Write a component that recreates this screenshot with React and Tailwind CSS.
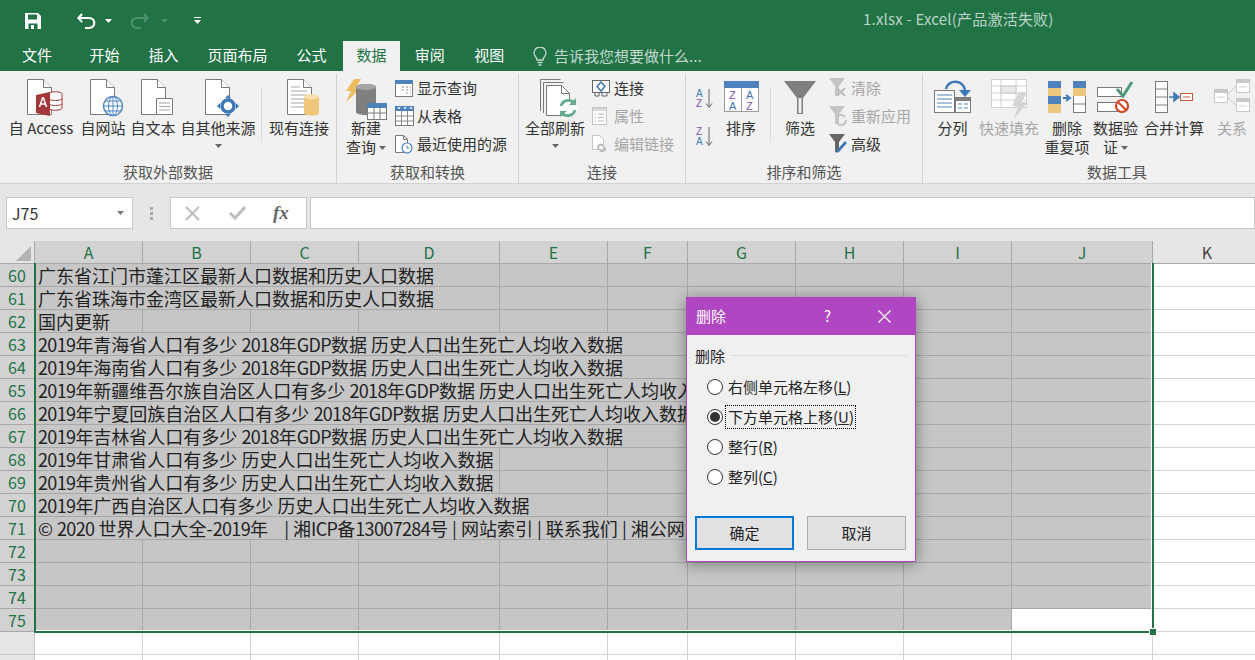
import React from "react";

const FONT = "font-['Noto_Sans_CJK_SC','Noto_Sans',sans-serif]";

const COLUMNS = ["A", "B", "C", "D", "E", "F", "G", "H", "I", "J", "K"];
const GRID = "grid h-[23px] grid-rows-[23px] grid-cols-[108px_108px_108px_141px_108px_80px_108px_108px_108px_141px_108px]";

const ROWS = [
    {n: 60, text: "广东省江门市蓬江区最新人口数据和历史人口数据", span: "col-span-4", used: 4},
    {n: 61, text: "广东省珠海市金湾区最新人口数据和历史人口数据", span: "col-span-4", used: 4},
    {n: 62, text: "国内更新", span: "col-span-1", used: 1},
    {n: 63, text: "2019年青海省人口有多少 2018年GDP数据 历史人口出生死亡人均收入数据", span: "col-span-6", used: 6},
    {n: 64, text: "2019年海南省人口有多少 2018年GDP数据 历史人口出生死亡人均收入数据", span: "col-span-6", used: 6},
    {n: 65, text: "2019年新疆维吾尔族自治区人口有多少 2018年GDP数据 历史人口出生死亡人均收入数据", span: "col-span-7", used: 7},
    {n: 66, text: "2019年宁夏回族自治区人口有多少 2018年GDP数据 历史人口出生死亡人均收入数据", span: "col-span-7", used: 7},
    {n: 67, text: "2019年吉林省人口有多少 2018年GDP数据 历史人口出生死亡人均收入数据", span: "col-span-6", used: 6},
    {n: 68, text: "2019年甘肃省人口有多少 历史人口出生死亡人均收入数据", span: "col-span-4", used: 4},
    {n: 69, text: "2019年贵州省人口有多少 历史人口出生死亡人均收入数据", span: "col-span-4", used: 4},
    {n: 70, text: "2019年广西自治区人口有多少 历史人口出生死亡人均收入数据", span: "col-span-5", used: 5},
    {n: 71, text: "© 2020 世界人口大全-2019年    | 湘ICP备13007284号 | 网站索引 | 联系我们 | 湘公网", span: "col-span-7", used: 7},
    {n: 72, used: 0},
    {n: 73, used: 0},
    {n: 74, used: 0},
    {n: 75, used: 0},
    {n: 76, used: 0, plain: true},
    {n: 77, used: 0, plain: true},
];

// latin runs sit tighter than the CJK font's own digits
const CellText = ({text}) => text.split(/([0-9A-Za-z]+)/).map((part, i) => (
    i % 2 === 1 ? <span key={i} className="tracking-[-0.65px]">{part}</span> : part
));

const Caret = ({className = "", color = "#666"}) => (
    <svg width="7" height="4" viewBox="0 0 7 4" className={className}><path d="M0 0h7L3.500 4z" fill={color}/></svg>
);

const Doc = ({lines = false}) => (
    <g>
        <path d="M.5.5h16l8 8v27H.5z" fill="#fff" stroke="#7a7a7a"/>
        <path d="M16.500.5v8h8" fill="#fff" stroke="#7a7a7a"/>
        {lines && <path d="M4 8h9M4 12h16M4 16h16M4 20h16M4 24h16M4 28h16" stroke="#a6a6a6"/>}
    </g>
);

const AccessIcon = () => (
    <svg width="36" height="38" viewBox="0 0 36 38">
        <Doc/>
        <path d="M22 15c0-3 13-3 13 0v14c0 3-13 3-13 0z" fill="#fff" stroke="#a4373a"/>
        <path d="M22 20c2 2 11 2 13 0M22 25c2 2 11 2 13 0" fill="none" stroke="#a4373a"/>
        <path d="M9 16l14-3v24L9 34z" fill="#a4373a"/>
        <path d="M12.500 28l3-9h1l3 9M13.500 25h5" fill="none" stroke="#fff" strokeWidth="1.500"/>
    </svg>
);

const WebIcon = () => (
    <svg width="34" height="38" viewBox="0 0 34 38">
        <Doc/>
        <circle cx="23" cy="27" r="9.500" fill="#fff" stroke="#4f86c6" strokeWidth="1.500"/>
        <path d="M13.500 27h19M15 22h16M15 32h16M23 17.500v19" stroke="#4f86c6"/>
        <ellipse cx="23" cy="27" rx="4.500" ry="9.500" fill="none" stroke="#4f86c6"/>
    </svg>
);

const TextIcon = () => (
    <svg width="33" height="38" viewBox="0 0 33 38">
        <Doc/>
        <path d="M15.500 19.500h16v16h-16z" fill="#fff" stroke="#7a7a7a"/>
        <path d="M18 24h11M18 27.500h11M18 31h11" stroke="#a6a6a6"/>
    </svg>
);

const OtherIcon = () => (
    <svg width="34" height="38" viewBox="0 0 34 38">
        <Doc/>
        <circle cx="23" cy="27" r="6" fill="#fff" stroke="#3f78b8" strokeWidth="3.500"/>
        <path d="M23 16l3 3h-6zM23 38l3-3h-6zM12 27l3-3v6zM34 27l-3-3v6z" fill="#3f78b8"/>
    </svg>
);

const ExistingIcon = () => (
    <svg width="33" height="38" viewBox="0 0 33 38">
        <Doc lines/>
        <path d="M17 18c0-3.500 15-3.500 15 0v16c0 3.500-15 3.500-15 0z" fill="#eec67c"/>
        <ellipse cx="24.500" cy="18" rx="7.500" ry="2.500" fill="#f6deae"/>
    </svg>
);

const NewQueryIcon = () => (
    <svg width="42" height="41" viewBox="0 0 42 41">
        <path d="M9 0h7L10 10h5L1 23l5-11H1z" fill="#eebb5f"/>
        <path d="M11 8c0-4 20-4 20 0v25c0 4-20 4-20 0z" fill="#7f7f7f"/>
        <ellipse cx="21" cy="8" rx="10" ry="3" fill="#a6a6a6"/>
        <rect x="22.500" y="24.500" width="19" height="16" fill="#fff" stroke="#7a7a7a"/>
        <rect x="22" y="24" width="20" height="5" fill="#4f81bd"/>
        <path d="M22 34h20M29 29v12M35 29v12" stroke="#7a7a7a"/>
    </svg>
);

const ShowQueryIcon = () => (
    <svg width="18" height="17" viewBox="0 0 18 17">
        <rect x=".5" y=".5" width="17" height="16" fill="#fff" stroke="#7a7a7a"/>
        <rect width="18" height="4" fill="#4f81bd"/>
        <path d="M7 7h2M11 7h2M15 7h1M7 10h2M11 10h2M15 10h1M11 13h2M15 13h1" stroke="#8a8a8a"/>
    </svg>
);

const FromTableIcon = () => (
    <svg width="19" height="20" viewBox="0 0 19 20">
        <rect x=".5" y=".5" width="18" height="19" fill="#fff" stroke="#7a7a7a"/>
        <rect width="19" height="5" fill="#4f81bd"/>
        <path d="M1 10h17M1 15h17M6.500 5v14M12.500 5v14" stroke="#8a8a8a"/>
        <path d="M3 1l1 2 1-2M9 1l1 2 1-2M15 1l1 2 1-2" stroke="#fff" fill="none"/>
    </svg>
);

const RecentIcon = () => (
    <svg width="18" height="19" viewBox="0 0 18 19">
        <path d="M.5.500h8l4 4v13H.5z" fill="#fff" stroke="#7a7a7a"/>
        <path d="M8.500.5v4h4" fill="none" stroke="#7a7a7a"/>
        <circle cx="12" cy="13" r="5" fill="#fff" stroke="#4f81bd" strokeWidth="1.200"/>
        <path d="M12 10.500V13h2.500" fill="none" stroke="#4f81bd"/>
    </svg>
);

const RefreshAllIcon = () => (
    <svg width="38" height="38" viewBox="0 0 38 38">
        <path d="M.5 32V.5h20" fill="none" stroke="#7a7a7a"/>
        <path d="M3.500 34V3.500h20" fill="none" stroke="#7a7a7a"/>
        <path d="M6.500 36.500v-30h15l8 8v22z" fill="#fff" stroke="#7a7a7a"/>
        <path d="M21.500 6.500v8h8" fill="none" stroke="#7a7a7a"/>
        <circle cx="28" cy="29" r="9" fill="#fff"/>
        <path d="M21 27a7.500 7.500 0 0 1 13-3M35 31a7.500 7.500 0 0 1-13 3" fill="none" stroke="#63a98b" strokeWidth="2.800"/>
        <path d="M36 19v7h-7zM20 38v-6h7z" fill="#63a98b"/>
    </svg>
);

const ConnectIcon = () => (
    <svg width="18" height="17" viewBox="0 0 18 17">
        <rect x=".5" y=".5" width="17" height="12" fill="#fff" stroke="#666"/>
        <path d="M9 2l4 4.500L9 11 5 6.500z" fill="#fff" stroke="#3f78b8" strokeWidth="1.500"/>
        <path d="M3 13v3h4v-3M10 13v3h5v-3" fill="none" stroke="#666"/>
    </svg>
);

const PropsIcon = () => (
    <svg width="15" height="18" viewBox="0 0 15 18">
        <rect x=".5" y=".5" width="14" height="17" fill="#fff" stroke="#c4c4c4"/>
        <rect x="1" y="1" width="13" height="3" fill="#d8d8d8"/>
        <path d="M3 7h1M6 7h6M3 10.500h1M6 10.500h6M3 14h1M6 14h6" stroke="#bbb"/>
    </svg>
);

const EditLinkIcon = () => (
    <svg width="16" height="19" viewBox="0 0 16 19">
        <path d="M.5.500h7l4 4v10H.5z" fill="#fff" stroke="#c4c4c4"/>
        <path d="M7 14c-3-3 2-6 4-3M12 12c3 3-2 6-4 3" fill="none" stroke="#b8b8b8" strokeWidth="2"/>
    </svg>
);

const SortUpIcon = ({flip}) => (
    <svg width="18" height="21" viewBox="0 0 18 21">
        <text x="0" y="9" fontSize="10" fill={flip ? "#8054a8" : "#3f78b8"} fontFamily="Liberation Sans, sans-serif">{flip ? "Z" : "A"}</text>
        <text x="0" y="19" fontSize="10" fill={flip ? "#3f78b8" : "#8054a8"} fontFamily="Liberation Sans, sans-serif">{flip ? "A" : "Z"}</text>
        <path d="M13 1v18M10 15.500l3 4 3-4" fill="none" stroke="#666"/>
    </svg>
);

const SortIcon = () => (
    <svg width="35" height="31" viewBox="0 0 35 31" className="mt-[2px]">
        <rect x=".5" y=".5" width="34" height="30" fill="#fff" stroke="#9a9a9a"/>
        <rect width="35" height="7" fill="#4f81bd"/>
        <path d="M17.500 7v24" stroke="#9a9a9a"/>
        <text x="5" y="18" fontSize="11" fill="#8054a8" fontFamily="Liberation Sans, sans-serif">Z</text>
        <text x="5" y="29" fontSize="11" fill="#3f78b8" fontFamily="Liberation Sans, sans-serif">A</text>
        <text x="22" y="18" fontSize="11" fill="#3f78b8" fontFamily="Liberation Sans, sans-serif">A</text>
        <text x="22" y="29" fontSize="11" fill="#8054a8" fontFamily="Liberation Sans, sans-serif">Z</text>
    </svg>
);

const FunnelIcon = () => (
    <svg width="32" height="33" viewBox="0 0 32 33" className="mt-[2px]">
        <path d="M0 0h32L19 17v16h-6V17z" fill="#7f7f7f"/>
        <path d="M14.500 17h3v15h-3z" fill="#f1f1f1"/>
    </svg>
);

const SmallFunnel = ({dim, mark}) => (
    <svg width="20" height="20" viewBox="0 0 20 20">
        <path d="M0 0h16l-6 8v10H6V8z" fill={dim ? "#c4c4c4" : "#666"}/>
        {mark === "x" && <path d="M8 10l8 8M16 10l-8 8" stroke="#bdbdbd" strokeWidth="2"/>}
        {mark === "r" && <path d="M7 14a5 5 0 0 1 9-3M17 14a5 5 0 0 1-9 3" fill="none" stroke="#c4c4c4" strokeWidth="2"/>}
        {mark === "p" && <path d="M7 19l1-3 8-9 2 2-8 9z" fill="#3f78b8"/>}
    </svg>
);

const SplitIcon = () => (
    <svg width="37" height="33" viewBox="0 0 37 33" className="mt-[1px]">
        <rect x=".5" y="10.500" width="20" height="22" fill="#fff" stroke="#7a7a7a"/>
        <path d="M3 15h15M3 19h15M3 23h15M3 27h15" stroke="#4f81bd" strokeWidth="1.200"/>
        <rect x="21.500" y="17.500" width="15" height="15" fill="#fff" stroke="#7a7a7a"/>
        <rect x="22" y="18" width="14" height="3" fill="#7f7f7f"/>
        <path d="M24 24h4M30 24h4M24 28h4M30 28h4" stroke="#4f81bd" strokeWidth="1.200"/>
        <path d="M12 9c2-10 18-10 19 2" fill="none" stroke="#3f78b8" strokeWidth="2.500"/>
        <path d="M25 10h12l-6 7z" fill="#3f78b8"/>
    </svg>
);

const FlashIcon = () => (
    <svg width="37" height="40" viewBox="0 0 37 40">
        <rect x=".5" y=".5" width="35" height="28" fill="#fff" stroke="#d0d0d0"/>
        <path d="M0 7h36M0 14h36M0 21h36M10 0v28M25 0v28" stroke="#d0d0d0"/>
        <rect x="10" y="7" width="15" height="7" fill="#e8e8e8" stroke="#c8c8c8"/>
        <path d="M28 13h8l-5 10h6L23 40l4-13h-6z" fill="#d4d4d4"/>
    </svg>
);

const DedupeIcon = () => (
    <svg width="38" height="32" viewBox="0 0 38 32" className="mt-[2px]">
        <rect width="13" height="32" fill="#4f81bd"/>
        <rect y="7" width="13" height="8" fill="#ecc77d"/>
        <rect y="23" width="13" height="9" fill="#ecc77d"/>
        <rect x="25.500" y=".5" width="12" height="31" fill="#fff" stroke="#7a7a7a"/>
        <rect x="25" width="13" height="7" fill="#4f81bd"/>
        <rect x="25" y="7" width="13" height="8" fill="#ecc77d"/>
        <path d="M25 23h13" stroke="#7a7a7a"/>
        <path d="M15 17h5M18 14l4 3-4 3" fill="none" stroke="#3f78b8" strokeWidth="2"/>
    </svg>
);

const ValidateIcon = () => (
    <svg width="37" height="32" viewBox="0 0 37 32" className="mt-[2px]">
        <rect x=".5" y="6.500" width="24" height="9" fill="#fff" stroke="#7a7a7a"/>
        <rect x=".5" y="21.500" width="24" height="9" fill="#fff" stroke="#7a7a7a"/>
        <path d="M20 8l6 7L35 1" fill="none" stroke="#4f9a7a" strokeWidth="3"/>
        <circle cx="25" cy="25" r="6" fill="#fff" stroke="#d2492a" strokeWidth="2.200"/>
        <path d="M21 21l8 8" stroke="#d2492a" strokeWidth="2.200"/>
    </svg>
);

const ConsolidateIcon = () => (
    <svg width="38" height="32" viewBox="0 0 38 32" className="mt-[2px]">
        <rect x=".5" y=".5" width="12" height="31" fill="#fff" stroke="#7a7a7a"/>
        <path d="M0 8h13M0 16h13M0 24h13" stroke="#7a7a7a"/>
        <path d="M14 16h8M19 12l5 4-5 4z" fill="#3f78b8" stroke="#3f78b8" strokeWidth="1.500"/>
        <rect x="25.500" y="12.500" width="12" height="7" fill="#fff" stroke="#c8553a"/>
        <path d="M28 16h7" stroke="#c8553a"/>
    </svg>
);

const RelationIcon = () => (
    <svg width="36" height="33" viewBox="0 0 36 33">
        <rect x=".5" y="10.500" width="13" height="13" fill="#fff" stroke="#c8c8c8"/>
        <rect x="22.500" y=".5" width="13" height="13" fill="#fff" stroke="#c8c8c8"/>
        <rect x="22.500" y="19.500" width="13" height="13" fill="#fff" stroke="#c8c8c8"/>
        <rect x="1" y="11" width="12" height="3" fill="#c8c8c8"/>
        <rect x="23" y="1" width="12" height="3" fill="#c8c8c8"/>
        <rect x="23" y="20" width="12" height="3" fill="#c8c8c8"/>
        <path d="M14 15l8-8M14 19l8 7" stroke="#c8c8c8"/>
        <path d="M3 18h8M25 8h8M25 27h8" stroke="#d4d4d4"/>
    </svg>
);

const Big = ({icon, width, lines, caret, dim, shift}) => (
    <div className={`flex flex-col items-center shrink-0 ${width}`}>
        <div className={`h-[44px] pt-[5px] flex justify-center ${shift ? "pl-[8px]" : ""}`}>{icon}</div>
        {lines.map((line) => (
            <div key={line} className={`h-[19px] leading-[19px] whitespace-nowrap ${dim ? "text-[#a6a6a6]" : ""}`}>
                {line}
                {caret === "inline" && line === lines[lines.length - 1] && <Caret className="inline ml-[3px] mb-[2px]"/>}
            </div>
        ))}
        {caret === "below" && <Caret className="mt-[7px]"/>}
    </div>
);

const Small = ({icon, label, dim}) => (
    <div className={`flex items-center h-[28px] whitespace-nowrap ${dim ? "text-[#a6a6a6]" : ""}`}>
        <div className="w-[22px] flex justify-start">{icon}</div>
        <span>{label}</span>
    </div>
);

const Group = ({label, width, children}) => (
    <div className={`flex flex-col shrink-0 border-r border-[#d4d4d4] ${width}`}>
        <div className="flex h-[88px]">{children}</div>
        <div className="h-[20px] leading-[20px] text-center text-[#555]">{label}</div>
    </div>
);

const Divider = () => <div className="w-px h-[54px] mt-[14px] mx-[1px] bg-[#dcdcdc] shrink-0"/>;

const Ribbon = () => (
    <div className="flex h-[113px] pt-[3px] bg-[#f1f1f1] border-b border-[#d2d2d2] text-[15px] text-[#333] overflow-hidden">
        <Group label="获取外部数据" width="w-[337px]">
            <div className="w-[6px] shrink-0"/>
            <Big width="w-[70px]" icon={<AccessIcon/>} lines={["自 Access"]} shift/>
            <Big width="w-[54px]" icon={<WebIcon/>} lines={["自网站"]} shift/>
            <Big width="w-[46px]" icon={<TextIcon/>} lines={["自文本"]} shift/>
            <Big width="w-[84px]" icon={<OtherIcon/>} lines={["自其他来源"]} caret="below" shift/>
            <Divider/>
            <Big width="w-[72px]" icon={<ExistingIcon/>} lines={["现有连接"]} shift/>
        </Group>
        <Group label="获取和转换" width="w-[182px]">
            <Big width="w-[58px]" icon={<NewQueryIcon/>} lines={["新建", "查询"]} caret="inline"/>
            <div>
                <Small icon={<ShowQueryIcon/>} label="显示查询"/>
                <Small icon={<FromTableIcon/>} label="从表格"/>
                <Small icon={<RecentIcon/>} label="最近使用的源"/>
            </div>
        </Group>
        <Group label="连接" width="w-[167px]">
            <div className="w-[3px] shrink-0"/>
            <Big width="w-[66px]" icon={<RefreshAllIcon/>} lines={["全部刷新"]} caret="below" shift/>
            <div className="pl-[4px]">
                <Small icon={<ConnectIcon/>} label="连接"/>
                <Small icon={<PropsIcon/>} label="属性" dim/>
                <Small icon={<EditLinkIcon/>} label="编辑链接" dim/>
            </div>
        </Group>
        <Group label="排序和筛选" width="w-[237px]">
            <div className="w-[34px] shrink-0 pl-[10px] pt-[14px] flex flex-col gap-[17px]">
                <SortUpIcon/>
                <SortUpIcon flip/>
            </div>
            <Big width="w-[42px]" icon={<SortIcon/>} lines={["排序"]}/>
            <div className="w-[7px] shrink-0"/>
            <Divider/>
            <Big width="w-[56px]" icon={<FunnelIcon/>} lines={["筛选"]}/>
            <div className="pl-[1px]">
                <Small icon={<SmallFunnel dim mark="x"/>} label="清除" dim/>
                <Small icon={<SmallFunnel dim mark="r"/>} label="重新应用" dim/>
                <Small icon={<SmallFunnel mark="p"/>} label="高级"/>
            </div>
        </Group>
        <div className="flex flex-col shrink-0 w-[332px]">
            <div className="flex h-[88px]">
                <div className="w-[8px] shrink-0"/>
                <Big width="w-[43px]" icon={<SplitIcon/>} lines={["分列"]}/>
                <Big width="w-[70px]" icon={<FlashIcon/>} lines={["快速填充"]} dim/>
                <Big width="w-[46px]" icon={<DedupeIcon/>} lines={["删除", "重复项"]}/>
                <Big width="w-[51px]" icon={<ValidateIcon/>} lines={["数据验", "证"]} caret="inline"/>
                <Big width="w-[66px]" icon={<ConsolidateIcon/>} lines={["合并计算"]}/>
                <Big width="w-[50px]" icon={<RelationIcon/>} lines={["关系"]} dim/>
            </div>
            <div className="h-[20px] leading-[20px] text-center text-[#555] pl-[56px]">数据工具</div>
        </div>
    </div>
);

const TitleBar = () => (
    <div className="h-[41px] flex items-center relative">
        <svg width="16" height="16" viewBox="0 0 16 16" className="ml-[25px]">
            <path d="M0 0h13l3 3v13H0z" fill="#fff"/>
            <path d="M3 1.500h9v5H3z" fill="#217346"/>
            <path d="M3.500 10.500h9V16h-9z" fill="#217346"/>
            <path d="M6 12h3v4H6z" fill="#fff"/>
        </svg>
        <svg width="19" height="16" viewBox="0 0 19 16" className="ml-[36px]">
            <path d="M5 1L1.500 5 5 9M2 5h10c7 0 7 9 0 10H8" fill="none" stroke="#fff" strokeWidth="2.200"/>
        </svg>
        <Caret className="ml-[9px]" color="#fff"/>
        <svg width="19" height="16" viewBox="0 0 19 16" className="ml-[18px]">
            <path d="M14 1l3.500 4L14 9M17 5H7c-7 0-7 9 0 10h4" fill="none" stroke="#4c9170" strokeWidth="2.200"/>
        </svg>
        <Caret className="ml-[12px]" color="#4c9170"/>
        <svg width="7" height="7" viewBox="0 0 7 7" className="ml-[26px]">
            <path d="M0 0h7v1H0zM0 3h7L3.500 7z" fill="#fff"/>
        </svg>
        <div className="ml-[662px] mb-[3px] text-[15px] text-[#bcd5c8] whitespace-nowrap tracking-[0.2px]">1.xlsx - Excel(产品激活失败)</div>
    </div>
);

const Tabs = () => (
    <div className="h-[30px] flex text-[15px] text-white leading-[28px]">
        <div className="w-[75px] text-center pr-[1px]">文件</div>
        {["开始", "插入", "页面布局", "公式"].map((t) => (
            <div key={t} className="px-[14.5px]">{t}</div>
        ))}
        <div className="ml-[2px] w-[57px] text-center bg-[#f1f1f1] text-[#217346]">数据</div>
        {["审阅", "视图"].map((t) => (
            <div key={t} className="px-[14.75px]">{t}</div>
        ))}
        <div className="ml-[14px] flex items-center text-[#c4d9ce]">
            <svg width="14" height="20" viewBox="0 0 14 20" className="mr-[7px] mt-[2px]">
                <path d="M4 13c0-3-3-4-3-7a6 6 0 0 1 12 0c0 3-3 4-3 7z" fill="none" stroke="#c4d9ce" strokeWidth="1.300"/>
                <path d="M4.500 15.500h5M5.500 18h3" stroke="#c4d9ce" strokeWidth="1.300"/>
            </svg>
            告诉我您想要做什么...
        </div>
    </div>
);

const FormulaBar = () => (
    <div className="h-[57px] bg-[#e6e6e6] pt-[13px] flex">
        <div className="ml-[6px] w-[127px] h-[32px] bg-white border border-[#c6c6c6] flex items-center justify-between pl-[5px] pr-[8px] text-[16px] text-[#333]">
            J75
            <Caret color="#777"/>
        </div>
        <div className="w-[37px] h-[32px] flex flex-col items-center justify-center gap-[2px]">
            <div className="w-[3px] h-[3px] bg-[#aaa]"/>
            <div className="w-[3px] h-[3px] bg-[#aaa]"/>
            <div className="w-[3px] h-[3px] bg-[#aaa]"/>
        </div>
        <div className="w-[137px] h-[32px] bg-white border border-[#c6c6c6] flex items-center">
            <svg width="15" height="15" viewBox="0 0 15 15" className="ml-[14px]">
                <path d="M1 1l13 13M14 1L1 14" stroke="#bdbdbd" strokeWidth="2"/>
            </svg>
            <svg width="17" height="14" viewBox="0 0 17 14" className="ml-[29px]">
                <path d="M1 7l5 5L16 1" fill="none" stroke="#bdbdbd" strokeWidth="3"/>
            </svg>
            <span className="ml-[27px] font-['Liberation_Serif',serif] italic font-bold text-[19px] text-[#666]">fx</span>
        </div>
        <div className="ml-[3px] flex-1 h-[32px] bg-white border border-[#c6c6c6]"/>
    </div>
);

const Sheet = () => (
    <div className="relative h-[419px] overflow-hidden bg-white">
        <div className="flex h-[23px] w-[1300px]">
            <div className="w-[35px] bg-[#e6e6e6] border-r border-b border-[#a8a8a8] relative overflow-hidden">
                <svg width="15" height="15" viewBox="0 0 15 15" className="absolute right-[3px] bottom-[2px]">
                    <path d="M15 0v15H0z" fill="#b4b4b4"/>
                </svg>
            </div>
            <div className={GRID}>
                {COLUMNS.map((c) => (
                    <div
                        key={c}
                        className={c === "K"
                            ? "bg-[#e6e6e6] border-b border-[#a8a8a8] text-center text-[16px] text-[#444] leading-[22px]"
                            : "bg-[#d2d2d2] border-r border-b border-[#a8a8a8] text-center text-[16px] text-[#217346] leading-[22px]"}
                    >
                        {c}
                    </div>
                ))}
            </div>
        </div>
        {ROWS.map((row) => (
            <div key={row.n} className="flex h-[23px] w-[1300px]">
                <div className={row.plain
                    ? "w-[35px] bg-[#e6e6e6] border-r border-b border-[#c6c6c6]"
                    : "w-[35px] bg-[#d2d2d2] border-r border-b border-[#a8a8a8] text-center text-[16px] text-[#217346] leading-[22px]"}
                >
                    {!row.plain && row.n}
                </div>
                <div className={GRID}>
                    {row.text && (
                        <div className={`${row.span} bg-[#c6c6c6] border-r border-b border-[#a8a8a8] pl-[3px] text-[18px] leading-[23px] text-[#222] whitespace-pre`}>
                            <CellText text={row.text}/>
                        </div>
                    )}
                    {COLUMNS.slice(row.used).map((c) => {
                        const isWhite = row.plain || c === "K" || (row.n === 75 && c === "J");
                        return (
                            <div
                                key={c}
                                className={isWhite
                                    ? `bg-white border-b ${row.n === 75 && c === "J" ? "" : "border-r"} border-[#d4d4d4]`
                                    : "bg-[#c6c6c6] border-r border-b border-[#a8a8a8]"}
                            />
                        );
                    })}
                </div>
            </div>
        ))}
        {/* selection outline */}
        <div className="absolute left-[34px] top-[22px] w-[1120px] h-[370px] border-2 border-[#217346] border-t-0 shadow-[inset_-1px_-1px_0_#fff]"/>
        <div className="absolute left-[1150px] top-[388px] w-[6px] h-[6px] bg-[#217346] outline-1 outline-white"/>
    </div>
);

const Radio = ({checked, label, hot, focus}) => (
    <div className="flex items-center h-[30px] pl-[12px]">
        <div className="w-[16px] h-[16px] rounded-full bg-white border border-[#333] flex items-center justify-center shrink-0">
            {checked && <div className="w-[10px] h-[10px] rounded-full bg-[#333]"/>}
        </div>
        <div className={`ml-[3px] pl-[2px] pr-[1px] h-[22px] leading-[21px] ${focus ? "outline-1 outline-dotted outline-black" : ""}`}>
            {label}(<span className="underline">{hot}</span>)
        </div>
    </div>
);

const DeleteDialog = () => (
    <div className="absolute left-[686px] top-[297px] w-[230px] h-[265px] bg-[#f0f0f0] border border-[#b146c2] shadow-[0_2px_14px_rgba(0,0,0,0.4)] text-[15px] text-[#222]">
        <div className="h-[37px] bg-[#b146c2] text-white flex items-center pl-[9px]">
            <span className="flex-1">删除</span>
            <span className="mr-[47px]">?</span>
            <svg width="13" height="13" viewBox="0 0 13 13" className="mr-[24px]">
                <path d="M.5.500l12 12M12.500.500l-12 12" stroke="#fff" strokeWidth="1.200"/>
            </svg>
        </div>
        <div className="px-[8px] pt-[11px]">
            <div className="flex items-center h-[20px]">
                <span>删除</span>
                <div className="flex-1 h-px bg-[#dcdcdc] ml-[5px] mb-[2px]"/>
            </div>
            <div className="mt-[6px]">
                <Radio label="右侧单元格左移" hot="L"/>
                <Radio label="下方单元格上移" hot="U" checked focus/>
                <Radio label="整行" hot="R"/>
                <Radio label="整列" hot="C"/>
            </div>
            <div className="flex justify-between mt-[24px] pr-[1px]">
                <button className="w-[99px] h-[34px] bg-[#e1e1e1] border-2 border-[#0078d7]">确定</button>
                <button className="w-[99px] h-[34px] bg-[#e1e1e1] border border-[#adadad]">取消</button>
            </div>
        </div>
    </div>
);

const App = () => {
    return (
        <div className={`relative w-[1255px] h-[660px] overflow-hidden bg-[#e6e6e6] ${FONT}`}>
            <div className="bg-[#217346]">
                <TitleBar/>
                <Tabs/>
            </div>
            <Ribbon/>
            <FormulaBar/>
            <Sheet/>
            <DeleteDialog/>
        </div>
    );
};

export default App;
